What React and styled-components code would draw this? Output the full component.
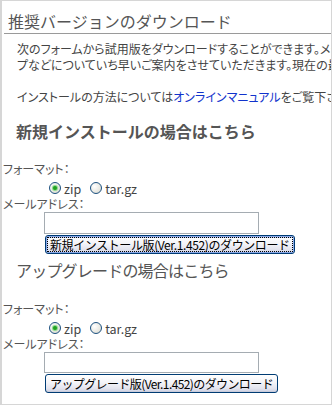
import React from "react";
import styled, { createGlobalStyle } from "styled-components";

const GlobalStyle = createGlobalStyle`
  body {
    margin: 0;
    background: #fff;
    font-family: "Noto Sans CJK JP", "Noto Sans", sans-serif;
    font-feature-settings: "palt";
  }
`;

const Frame = styled.div`
  width: 332px;
  height: 405px;
  box-sizing: border-box;
  border: 1px solid #d6d6d6;
  border-left-width: 2px;
  overflow: hidden;
  background: #fff;
  color: #444;
`;

const Title = styled.h2`
  margin: 0 0 0 2px;
  padding: 9px 0 1px 4px;
  font-size: 16px;
  line-height: 22px;
  font-weight: normal;
  font-feature-settings: normal;
  color: #555;
  white-space: nowrap;
  border-bottom: 1px solid #9a9a9a;
`;

const Intro = styled.div`
  padding-left: 15px;
  margin-top: 7px;
  font-size: 12px;
  line-height: 16px;
  white-space: nowrap;
`;

const Para = styled.p`
  margin: 0 0 16px;
  &:last-child {
    margin-bottom: 0;
  }
`;

const Link = styled.a`
  color: #1133cc;
  text-decoration: none;
`;

const SectionTitle = styled.h3`
  margin: ${(p) => p.$top}px 0 0 14px;
  font-size: 16px;
  line-height: 22px;
  font-weight: ${(p) => (p.$bold ? "bold" : "normal")};
  letter-spacing: ${(p) => (p.$bold ? "0" : "-0.8px")};
  font-feature-settings: normal;
  color: #555;
  white-space: nowrap;
`;

const Form = styled.form`
  margin: ${(p) => p.$top}px 0 0 1px;
  font-size: 12px;
  line-height: 16px;
`;

const Label = styled.div`
  color: #555;
  white-space: nowrap;
`;

const RadioRow = styled.div`
  display: flex;
  align-items: center;
  height: 16px;
  margin-top: 3px;
  padding-left: 46px;
  color: #444;
`;

const RadioLabel = styled.label`
  display: flex;
  align-items: center;
  gap: 3px;
  margin-right: 9px;
  font-size: 12.5px;
  line-height: 15px;
`;

const Radio = styled.input.attrs({ type: "radio" })`
  appearance: none;
  margin: 0;
  width: 12px;
  height: 12px;
  border-radius: 50%;
  border: 1px solid #1c5180;
  background: radial-gradient(circle at 35% 35%, #ffffff 0%, #e8e8e2 60%, #cfcfc6 100%);
  display: grid;
  place-items: center;
  &:checked::after {
    content: "";
    width: 4px;
    height: 4px;
    border-radius: 50%;
    background: #21a121;
    box-shadow: 0 0 1px 1px #7fd47f;
  }
`;

const TextInput = styled.input.attrs({ type: "text" })`
  display: block;
  box-sizing: border-box;
  width: 215px;
  height: ${(p) => p.$h}px;
  margin: 0 0 0 41px;
  border: 1px solid #a5acb2;
  background: #fff;
  padding: 0 3px;
  font-size: 12px;
`;

const Button = styled.button`
  display: block;
  box-sizing: border-box;
  height: 19px;
  margin: 1px 0 0 42px;
  padding: 1px 2px;
  border: 1px solid #003c74;
  border-radius: 3px;
  background: linear-gradient(to bottom, #ffffff 0%, #f4f4f8 45%, #e2e3ee 80%, #cdd0e2 100%);
  box-shadow: ${(p) =>
    p.$focused ? "inset 0 0 0 1px #8aa8e8, inset 1px 1px 0 1px #c6d6f7" : "inset 0 -1px 0 #c9ccdb"};
  font-family: inherit;
  font-size: 12px;
  line-height: 13px;
  letter-spacing: ${(p) => (p.$focused ? "-0.4px" : "-0.6px")};
  color: #000;
  white-space: nowrap;
`;

const ButtonText = styled.span`
  display: block;
  padding: 0 2px;
  outline: ${(p) => (p.$focused ? "1px dotted #000" : "none")};
`;

function DownloadForm({ title, bold, titleTop, formTop, inputHeight, buttonLabel, focused }) {
  return (
    <>
      <SectionTitle $top={titleTop} $bold={bold}>
        {title}
      </SectionTitle>
      <Form $top={formTop} onSubmit={(e) => e.preventDefault()}>
        <Label>フォーマット：</Label>
        <RadioRow>
          <RadioLabel>
            <Radio name={title} defaultChecked />
            zip
          </RadioLabel>
          <RadioLabel>
            <Radio name={title} />
            tar.gz
          </RadioLabel>
        </RadioRow>
        <Label>メールアドレス：</Label>
        <TextInput $h={inputHeight} />
        <Button type="submit" $focused={focused}>
          <ButtonText $focused={focused}>{buttonLabel}</ButtonText>
        </Button>
      </Form>
    </>
  );
}

export default function App() {
  return (
    <Frame>
      <GlobalStyle />
      <Title>推奨バージョンのダウンロード</Title>
      <Intro>
        <Para>
          次のフォームから試用版をダウンロードすることができます。メールアドレスを入力していただくと、バージョンアッ
          <br />
          プなどについていち早いご案内をさせていただきます。現在の最新版はVer.1.452です。
        </Para>
        <Para>
          インストールの方法については<Link href="#">オンラインマニュアル</Link>をご覧下さい。
        </Para>
      </Intro>
      <DownloadForm
        title="新規インストールの場合はこちら"
        bold
        titleTop={15}
        formTop={19}
        inputHeight={22}
        buttonLabel="新規インストール版(Ver.1.452)のダウンロード"
        focused
      />
      <DownloadForm
        title="アップグレードの場合はこちら"
        titleTop={5}
        formTop={20}
        inputHeight={21}
        buttonLabel="アップグレード版(Ver.1.452)のダウンロード"
      />
    </Frame>
  );
}
